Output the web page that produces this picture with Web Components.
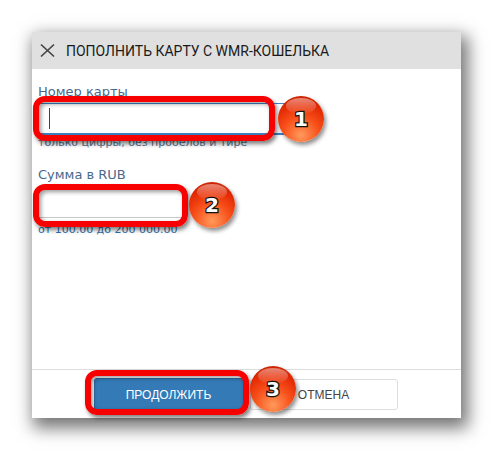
<!DOCTYPE html>
<html lang="ru">
<head>
<meta charset="utf-8">
<title>Пополнить карту</title>
<style>
    html, body { margin: 0; background: #fff; }
    body { padding: 32px; width: 429px; }
</style>
</head>
<body>
<card-dialog heading="ПОПОЛНИТЬ КАРТУ С WMR-КОШЕЛЬКА">
    <form-field label="Номер карты" hint="только цифры, без пробелов и тире" width="252" active></form-field>
    <form-field label="Сумма в RUB" hint="от 100.00 до 200 000.00" width="146"></form-field>
    <action-button slot="footer" primary>ПРОДОЛЖИТЬ</action-button>
    <action-button slot="footer">ОТМЕНА</action-button>
    <step-mark slot="marks" n="1" style="--x:1px;--y:64px;--w:242px;--h:45px;--bx:246px;--by:64px"></step-mark>
    <step-mark slot="marks" n="2" style="--x:1px;--y:152px;--w:155px;--h:43px;--bx:157px;--by:150px"></step-mark>
    <step-mark slot="marks" n="3" style="--x:53px;--y:338px;--w:164px;--h:45px;--bx:218px;--by:334px"></step-mark>
</card-dialog>
<script>
class CardDialog extends HTMLElement {
    constructor() {
        super();
        this.attachShadow({ mode: 'open' });
    }

    connectedCallback() {
        this.shadowRoot.innerHTML = `
            <style>
                :host {
                    display: flex;
                    flex-direction: column;
                    position: relative;
                    height: 386px;
                    background: #fff;
                    box-shadow: 4px 7px 16px 3px rgba(0, 0, 0, 0.55);
                    font-family: "DejaVu Sans", sans-serif;
                }
                header {
                    display: flex;
                    align-items: center;
                    gap: 11px;
                    height: 37px;
                    padding-left: 8px;
                    background: #e0e0e0;
                    color: #1a1a1a;
                    font: 400 14px Roboto, sans-serif;
                    white-space: nowrap;
                }
                svg { display: block; }
                main {
                    flex: 1;
                    display: flex;
                    flex-direction: column;
                    gap: 16px;
                    padding: 14px 6px 0;
                }
                footer {
                    display: flex;
                    justify-content: center;
                    align-items: center;
                    gap: 6px;
                    height: 47px;
                    padding: 1px 2px 0 0;
                    border-top: 1px solid #ddd;
                }
            </style>
            <header>
                <svg width="15" height="15" viewBox="0 0 15 15" fill="none" stroke="#444" stroke-width="1.7">
                    <path d="M1 1.5 14 13.5M14 1.5 1 13.5"/>
                </svg>
                <span>${this.getAttribute('heading')}</span>
            </header>
            <main><slot></slot></main>
            <footer><slot name="footer"></slot></footer>
            <slot name="marks"></slot>
        `;
    }
}

class FormField extends HTMLElement {
    constructor() {
        super();
        this.attachShadow({ mode: 'open' });
    }

    connectedCallback() {
        const active = this.hasAttribute('active');
        this.shadowRoot.innerHTML = `
            <style>
                :host { display: block; }
                label {
                    display: block;
                    height: 16px;
                    line-height: 18px;
                    color: #48688c;
                    font-size: 13px;
                }
                .input {
                    display: flex;
                    align-items: center;
                    box-sizing: border-box;
                    width: ${this.getAttribute('width')}px;
                    height: 32px;
                    margin-top: 4px;
                    padding-left: 10px;
                    border: 1px solid ${active ? '#3d85c6' : 'transparent'};
                    border-bottom: ${active ? '2px solid #3d85c6' : '1px solid #c8c8c8'};
                }
                .caret { width: 1px; height: 21px; background: #444; }
                small {
                    display: block;
                    height: 14px;
                    line-height: 14px;
                    margin-top: ${active ? 1 : 5}px;
                    color: ${active ? '#5a7390' : '#2f6ea8'};
                    font-size: 11px;
                    white-space: nowrap;
                }
            </style>
            <label>${this.getAttribute('label')}</label>
            <div class="input">${active ? '<span class="caret"></span>' : ''}</div>
            <small>${this.getAttribute('hint')}</small>
        `;
    }
}

class ActionButton extends HTMLElement {
    constructor() {
        super();
        this.attachShadow({ mode: 'open' });
    }

    connectedCallback() {
        const primary = this.hasAttribute('primary');
        this.shadowRoot.innerHTML = `
            <style>
                :host {
                    display: flex;
                    align-items: center;
                    justify-content: center;
                    box-sizing: border-box;
                    width: ${primary ? 150 : 148}px;
                    height: ${primary ? 33 : 31}px;
                    border: 1px solid ${primary ? '#2e6da4' : '#ddd'};
                    border-radius: 3px;
                    background: ${primary ? '#337ab7' : '#fff'};
                    color: ${primary ? '#fff' : '#444'};
                    font: 12px "Liberation Sans", sans-serif;
                }
            </style>
            <slot></slot>
        `;
    }
}

// red frame and numbered ball drawn over the screenshot
class StepMark extends HTMLElement {
    constructor() {
        super();
        this.attachShadow({ mode: 'open' });
    }

    connectedCallback() {
        this.shadowRoot.innerHTML = `
            <style>
                :host { display: contents; }
                .frame {
                    position: absolute;
                    left: var(--x);
                    top: var(--y);
                    width: var(--w);
                    height: var(--h);
                    box-sizing: border-box;
                    border: 6px solid #f60000;
                    border-radius: 12px;
                    box-shadow: 2px 3px 4px rgba(0, 0, 0, 0.5), inset 2px 2px 4px rgba(0, 0, 0, 0.4);
                }
                .ball {
                    position: absolute;
                    left: var(--bx);
                    top: var(--by);
                    width: 46px;
                    height: 46px;
                    border-radius: 50%;
                    display: flex;
                    align-items: center;
                    justify-content: center;
                    background: radial-gradient(circle at 50% 85%, #ff9a5c 0, #f8501a 40%, #e52c05 68%, #b81c00 100%);
                    box-shadow: 2px 3px 4px rgba(0, 0, 0, 0.45);
                    overflow: hidden;
                }
                .ball::before {
                    content: "";
                    position: absolute;
                    left: 8px;
                    top: 2px;
                    width: 30px;
                    height: 16px;
                    border-radius: 50%;
                    background: linear-gradient(rgba(255, 255, 255, 0.45), rgba(255, 255, 255, 0.03));
                }
                span {
                    position: relative;
                    color: #fff;
                    font: bold 20px "DejaVu Sans", sans-serif;
                    -webkit-text-stroke: 2.5px #111;
                    paint-order: stroke fill;
                }
            </style>
            <div class="frame"></div>
            <div class="ball"><span>${this.getAttribute('n')}</span></div>
        `;
    }
}

customElements.define('card-dialog', CardDialog);
customElements.define('form-field', FormField);
customElements.define('action-button', ActionButton);
customElements.define('step-mark', StepMark);
</script>
</body>
</html>
